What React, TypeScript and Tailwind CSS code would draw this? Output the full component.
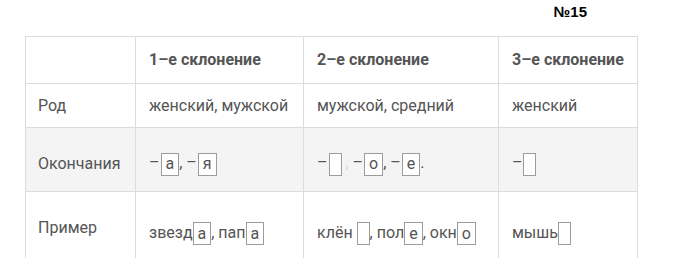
import React from "react";

const Box = ({ children, gap }: { children?: React.ReactNode; gap?: boolean }) => (
  <span
    className={`inline-flex items-center justify-center h-[23px] min-w-[13px] px-[4px] border border-[#9c9c9c] bg-white align-middle leading-none ${
      gap ? "ml-[1px]" : ""
    }`}
  >
    {children}
  </span>
);

const cell = "border border-[#dcdcdc] px-[13px]";

const App = () => {
  return (
    <div className="w-[678px] h-[258px] overflow-hidden bg-white font-['Roboto',sans-serif] text-[16px] text-[#555555]">
      <div className="h-[36px] flex justify-end pr-[91px] pt-[1px]">
        <span className="font-['Liberation_Sans',sans-serif] font-bold text-[15px] text-black">№15</span>
      </div>
      <table className="ml-[25px] table-fixed border-collapse">
        <colgroup>
          <col className="w-[110px]" />
          <col className="w-[168px]" />
          <col className="w-[195px]" />
          <col className="w-[139px]" />
        </colgroup>
        <tbody>
          <tr className="h-[47px] font-bold">
            <td className={cell}></td>
            <td className={cell}>1–е склонение</td>
            <td className={cell}>2–е склонение</td>
            <td className={cell}>3–е склонение</td>
          </tr>
          <tr className="h-[44px]">
            <td className="border border-[#dcdcdc] px-[12px]">Род</td>
            <td className={cell}>женский, мужской</td>
            <td className={cell}>мужской, средний</td>
            <td className={cell}>женский</td>
          </tr>
          <tr className="h-[64px] bg-[#f4f4f4]">
            <td className="border border-[#dcdcdc] px-[12px] pt-[8px]">Окончания</td>
            <td className={`${cell} pt-[8px]`}>
              –<Box gap>а</Box>, –<Box gap>я</Box>
            </td>
            <td className={`${cell} pt-[8px]`}>
              –<Box gap /> <span className="text-[#dadada]">,</span> –<Box gap>о</Box>, –<Box gap>е</Box>.
            </td>
            <td className={`${cell} pt-[8px]`}>
              –<Box />
            </td>
          </tr>
          <tr className="h-[80px]">
            <td className="border border-[#dcdcdc] px-[12px] pb-[7px]">Пример</td>
            <td className={`${cell} pt-[3px]`}>
              звезд<Box>а</Box>, пап<Box>а</Box>
            </td>
            <td className={`${cell} pt-[3px]`}>
              клён <Box />, пол<Box>е</Box>, окн<Box>о</Box>
            </td>
            <td className={`${cell} pt-[3px]`}>
              мышь<Box />
            </td>
          </tr>
        </tbody>
      </table>
    </div>
  );
};

export default App;
